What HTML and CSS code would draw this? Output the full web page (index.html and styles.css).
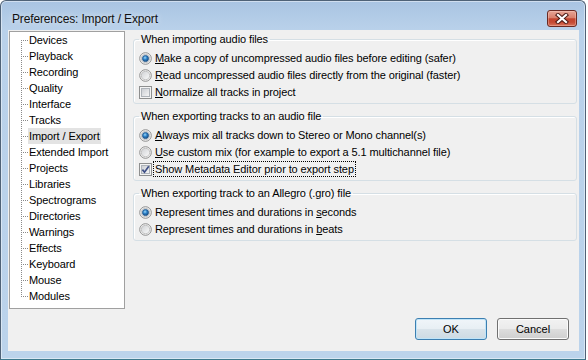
FILE: index.html
```html
<!DOCTYPE html>
<html lang="en">
<head>
<meta charset="utf-8">
<title>Preferences: Import / Export</title>
<link rel="stylesheet" href="styles.css">
</head>
<body>
<svg class="defs" width="0" height="0" aria-hidden="true">
  <defs>
    <linearGradient id="rfill" x1="0" y1="0" x2="1" y2="1">
      <stop offset="0" stop-color="#cfd1d4"/>
      <stop offset="1" stop-color="#fbfbfb"/>
    </linearGradient>
    <radialGradient id="rdot" cx="0.42" cy="0.38" r="0.65">
      <stop offset="0" stop-color="#9ed8f7"/>
      <stop offset="0.45" stop-color="#2f83c9"/>
      <stop offset="1" stop-color="#15497f"/>
    </radialGradient>
    <linearGradient id="cfill" x1="0" y1="0" x2="1" y2="1">
      <stop offset="0" stop-color="#c9ccd1"/>
      <stop offset="1" stop-color="#f7f7f7"/>
    </linearGradient>
    <symbol id="radio-off" viewBox="0 0 13 13">
      <circle cx="6.5" cy="6.5" r="5.8" fill="#f4f4f4" stroke="#8f8f8f" stroke-width="1"/>
      <circle cx="6.5" cy="6.5" r="4.2" fill="url(#rfill)" stroke="#b9b9b9" stroke-width="0.8"/>
    </symbol>
    <symbol id="radio-on" viewBox="0 0 13 13">
      <circle cx="6.5" cy="6.5" r="5.8" fill="#f4f4f4" stroke="#8f8f8f" stroke-width="1"/>
      <circle cx="6.5" cy="6.5" r="4.2" fill="#eef3f8" stroke="#b9b9b9" stroke-width="0.8"/>
      <circle cx="6.5" cy="6.5" r="3.1" fill="url(#rdot)" stroke="#1d4f82" stroke-width="0.7"/>
    </symbol>
    <symbol id="check-off" viewBox="0 0 13 13">
      <rect x="0.5" y="0.5" width="12" height="12" fill="#f4f4f4" stroke="#8e8f8f"/>
      <rect x="2.5" y="2.5" width="8" height="8" fill="url(#cfill)" stroke="#aeb3b9"/>
    </symbol>
    <symbol id="check-on" viewBox="0 0 13 13">
      <rect x="0.5" y="0.5" width="12" height="12" fill="#f4f4f4" stroke="#8e8f8f"/>
      <rect x="2.5" y="2.5" width="8" height="8" fill="url(#cfill)" stroke="#aeb3b9"/>
      <path d="M3.4 6.6 L5.5 9.2 L9.8 3.2" fill="none" stroke="#3e4f86" stroke-width="1.7"/>
    </symbol>
  </defs>
</svg>

<div class="window">
  <div class="titlebar">
    <span class="title">Preferences: Import / Export</span>
    <button class="close" type="button" aria-label="Close">
      <svg width="14" height="11" viewBox="0 0 14 11">
        <path d="M3 2 L11 9 M11 2 L3 9" stroke="#4b1a14" stroke-width="4.2" stroke-linecap="square"/>
        <path d="M3 2 L11 9 M11 2 L3 9" stroke="#ffffff" stroke-width="2.2" stroke-linecap="square"/>
      </svg>
    </button>
  </div>

  <div class="client">
    <div class="main">
      <ul class="tree">
        <li><span>Devices</span></li>
        <li><span>Playback</span></li>
        <li><span>Recording</span></li>
        <li><span>Quality</span></li>
        <li><span>Interface</span></li>
        <li><span>Tracks</span></li>
        <li class="sel"><span>Import / Export</span></li>
        <li><span>Extended Import</span></li>
        <li><span>Projects</span></li>
        <li><span>Libraries</span></li>
        <li><span>Spectrograms</span></li>
        <li><span>Directories</span></li>
        <li><span>Warnings</span></li>
        <li><span>Effects</span></li>
        <li><span>Keyboard</span></li>
        <li><span>Mouse</span></li>
        <li><span>Modules</span></li>
      </ul>

      <div class="panel">
        <fieldset class="group">
          <legend>When importing audio files</legend>
          <div class="opts">
            <div class="opt"><svg class="ctl" width="13" height="13"><use href="#radio-on"/></svg><span><u>M</u>ake a copy of uncompressed audio files before editing (safer)</span></div>
            <div class="opt"><svg class="ctl" width="13" height="13"><use href="#radio-off"/></svg><span><u>R</u>ead uncompressed audio files directly from the original (faster)</span></div>
            <div class="opt"><svg class="ctl" width="13" height="13"><use href="#check-off"/></svg><span><u>N</u>ormalize all tracks in project</span></div>
          </div>
        </fieldset>

        <fieldset class="group">
          <legend>When exporting tracks to an audio file</legend>
          <div class="opts">
            <div class="opt"><svg class="ctl" width="13" height="13"><use href="#radio-on"/></svg><span><u>A</u>lways mix all tracks down to Stereo or Mono channel(s)</span></div>
            <div class="opt"><svg class="ctl" width="13" height="13"><use href="#radio-off"/></svg><span><u>U</u>se custom mix (for example to export a 5.1 multichannel file)</span></div>
            <div class="opt"><svg class="ctl" width="13" height="13"><use href="#check-on"/></svg><span class="focus">Show Metadata Editor prior to export step</span></div>
          </div>
        </fieldset>

        <fieldset class="group">
          <legend>When exporting track to an Allegro (.gro) file</legend>
          <div class="opts">
            <div class="opt"><svg class="ctl" width="13" height="13"><use href="#radio-on"/></svg><span>Represent times and durations in <u>s</u>econds</span></div>
            <div class="opt"><svg class="ctl" width="13" height="13"><use href="#radio-off"/></svg><span>Represent times and durations in <u>b</u>eats</span></div>
          </div>
        </fieldset>
      </div>
    </div>

    <div class="buttons">
      <button class="btn default" type="button">OK</button>
      <button class="btn" type="button">Cancel</button>
    </div>
  </div>
</div>
</body>
</html>
```

FILE: styles.css
```css
html, body {
  margin: 0;
  padding: 0;
  background: #ffffff;
}

body {
  font-family: "Liberation Sans", Arial, sans-serif;
  font-size: 11px;
  color: #000;
}

.defs {
  position: absolute;
  width: 0;
  height: 0;
  overflow: hidden;
}

.window {
  width: 586px;
  height: 360px;
  box-sizing: border-box;
  border: 1px solid #4f6277;
  border-bottom-color: #3d7a8e;
  border-radius: 6px 6px 0 0;
  background: linear-gradient(to bottom, #a9c4e2 0px, #b9d1ea 28px, #bbd3eb 100%);
  box-shadow: inset 0 0 0 1px rgba(255, 255, 255, 0.45);
  display: flex;
  flex-direction: column;
}

.titlebar {
  height: 29px;
  display: flex;
  align-items: flex-start;
  justify-content: space-between;
  padding: 0 8px 0 11px;
  box-sizing: border-box;
}

.title {
  margin-top: 10px;
  line-height: 16px;
  font-size: 12px;
  letter-spacing: -0.15px;
  color: #111;
  text-shadow: 0 0 6px rgba(255, 255, 255, 0.8);
}

.close {
  margin-top: 9px;
  width: 30px;
  height: 17px;
  padding: 0;
  box-sizing: border-box;
  border: 1px solid #6a2a23;
  border-radius: 3px;
  background: linear-gradient(to bottom, #e6a596 0%, #d9806c 45%, #c2442e 52%, #c54a34 75%, #d8745c 100%);
  box-shadow: inset 0 0 0 1px rgba(255, 220, 210, 0.35);
  display: flex;
  align-items: center;
  justify-content: center;
}

.close svg {
  display: block;
}

.client {
  height: 321px;
  margin: 0 6px 0 7px;
  background: #f0f0f0;
  box-sizing: border-box;
  padding-top: 1px;
  padding-left: 1px;
  display: flex;
  flex-direction: column;
}

.main {
  display: flex;
  align-items: flex-start;
  gap: 8px;
}

.tree {
  list-style: none;
  margin: 0;
  padding: 0;
  width: 116px;
  height: 278px;
  box-sizing: border-box;
  border: 1px solid #a0a0a0;
  background: #fff;
  flex: none;
}

.tree li {
  position: relative;
  height: 16px;
  line-height: 16px;
  padding-left: 18px;
  white-space: nowrap;
}

.tree li span {
  display: inline-block;
  padding: 0 1px;
  height: 16px;
  letter-spacing: -0.1px;
}

.tree li.sel span {
  background: #e3e3e3;
}

.tree li::before {
  content: "";
  position: absolute;
  left: 11px;
  top: 8px;
  width: 7px;
  height: 1px;
  background: repeating-linear-gradient(to right, #8a8a8a 0 1px, transparent 1px 2px);
}

.tree li::after {
  content: "";
  position: absolute;
  left: 11px;
  top: 8px;
  width: 1px;
  height: 16px;
  background: repeating-linear-gradient(to bottom, #8a8a8a 0 1px, transparent 1px 2px);
}

.tree li:last-child::after {
  display: none;
}

.panel {
  flex: 1;
  margin-right: 2px;
  display: flex;
  flex-direction: column;
  gap: 4px;
}

.group {
  margin: 0;
  padding: 0 0 3px 5px;
  border: 1px solid #d5dfe5;
  border-radius: 3px;
  box-shadow: inset 1px 1px 0 #ffffff;
  min-width: 0;
}

.group legend {
  padding: 0 2px;
  margin: 0;
  line-height: 16px;
  letter-spacing: -0.1px;
}

.opts {
  margin-top: 3px;
  display: flex;
  flex-direction: column;
  gap: 1px;
}

.opt {
  display: flex;
  align-items: center;
  height: 16px;
  line-height: 16px;
  gap: 3px;
  letter-spacing: -0.1px;
  white-space: nowrap;
}

.ctl {
  display: block;
  flex: none;
}

.focus {
  outline: 1px dotted #000;
  outline-offset: 0;
  line-height: 14px;
  padding: 0 1px;
  margin-left: -1px;
}

u {
  text-decoration: underline;
  text-underline-offset: 1px;
}

.buttons {
  margin-top: 9px;
  display: flex;
  justify-content: flex-end;
  gap: 10px;
  padding-right: 10px;
}

.btn {
  width: 72px;
  height: 22px;
  box-sizing: border-box;
  font-family: "Liberation Sans", Arial, sans-serif;
  font-size: 11px;
  color: #000;
  border: 1px solid #707070;
  border-radius: 3px;
  background: linear-gradient(to bottom, #f2f2f2 0%, #ebebeb 48%, #dddddd 52%, #cfcfcf 100%);
  box-shadow: inset 0 0 0 1px #fbfbfb;
  padding: 0;
}

.btn.default {
  border-color: #3c7fb1;
  box-shadow: inset 0 0 0 1px #c0e4f8;
  background: linear-gradient(to bottom, #f0f5f9 0%, #e8eff4 48%, #d9e3ea 52%, #cddae3 100%);
}
```
